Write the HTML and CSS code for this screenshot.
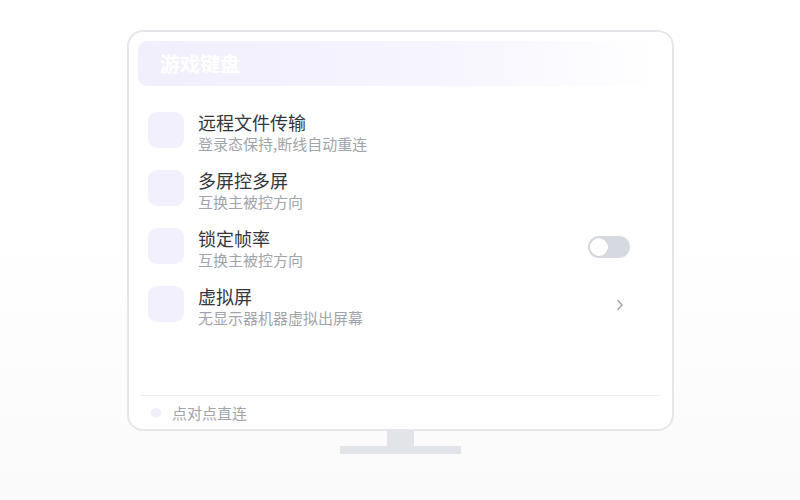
FILE: index.html
```html
<!DOCTYPE html>
<html lang="zh">
<head>
<meta charset="utf-8">
<link rel="stylesheet" href="styles.css">
</head>
<body>
<div class="stage">
  <div class="monitor">
    <div class="screen-header">游戏键盘</div>
    <div class="list">
      <div class="row">
        <div class="icon"></div>
        <div class="text">
          <div class="title">远程文件传输</div>
          <div class="sub">登录态保持,断线自动重连</div>
        </div>
      </div>
      <div class="row">
        <div class="icon"></div>
        <div class="text">
          <div class="title">多屏控多屏</div>
          <div class="sub">互换主被控方向</div>
        </div>
      </div>
      <div class="row">
        <div class="icon"></div>
        <div class="text">
          <div class="title">锁定帧率</div>
          <div class="sub">互换主被控方向</div>
        </div>
        <div class="toggle"><span class="knob"></span></div>
      </div>
      <div class="row">
        <div class="icon"></div>
        <div class="text">
          <div class="title">虚拟屏</div>
          <div class="sub">无显示器机器虚拟出屏幕</div>
        </div>
        <svg class="chevron" width="8" height="12" viewBox="0 0 8 12"><path d="M2 1.5 L6 6 L2 10.5" fill="none" stroke="#9aa1ab" stroke-width="1.3" stroke-linecap="round" stroke-linejoin="round"/></svg>
      </div>
    </div>
    <div class="footer">
      <span class="dot"></span>
      <span class="footer-text">点对点直连</span>
    </div>
  </div>
  <div class="neck"></div>
  <div class="base"></div>
</div>
</body>
</html>
```

FILE: styles.css
```css
* { box-sizing: border-box; }
html, body { margin: 0; padding: 0; }
body {
  width: 800px;
  height: 500px;
  overflow: hidden;
  background: linear-gradient(180deg, #ffffff 0%, #ffffff 46%, #fafafb 100%);
  font-family: "Noto Sans CJK SC", "Noto Sans", sans-serif;
}
.stage {
  display: flex;
  flex-direction: column;
  align-items: center;
  padding-top: 30px;
  padding-left: 1px;
}
.monitor {
  width: 547px;
  height: 401px;
  border: 2px solid #e4e6ea;
  border-radius: 16px;
  background: #ffffff;
  padding: 9px 9px 0 9px;
  display: flex;
  flex-direction: column;
}
.screen-header {
  height: 45px;
  border-radius: 9px;
  background: linear-gradient(90deg, #f2effd 0%, #f6f4fe 55%, rgba(255,255,255,0) 100%);
  color: #ffffff;
  font-size: 20px;
  font-weight: 700;
  line-height: 45px;
  padding-left: 22px;
}
.list {
  margin-top: 15px;
  display: flex;
  flex-direction: column;
}
.row {
  height: 58px;
  display: flex;
  align-items: center;
  padding: 0 33px 0 10px;
}
.icon {
  width: 36px;
  height: 36px;
  border-radius: 9px;
  background: #f3f0fe;
  flex: none;
}
.text {
  margin-left: 14px;
  margin-top: 6px;
  flex: 1;
}
.title {
  font-size: 18px;
  line-height: 22px;
  color: #33363c;
}
.sub {
  font-size: 15px;
  line-height: 22px;
  color: #a0a4ab;
}
.toggle {
  width: 42px;
  height: 22px;
  border-radius: 11px;
  background: #d6d9df;
  padding: 2px;
  display: flex;
  align-items: center;
  margin-top: 2px;
}
.knob {
  width: 18px;
  height: 18px;
  border-radius: 50%;
  background: #ffffff;
  box-shadow: 0 0 0 0.5px #c9ccd2;
}
.chevron {
  margin-right: 6px;
  margin-top: 2px;
}
.footer {
  margin: auto 2px 0 2px;
  height: 34px;
  border-top: 1px solid #eceef2;
  display: flex;
  align-items: center;
  padding-left: 11px;
}
.dot {
  width: 10px;
  height: 10px;
  border-radius: 50%;
  background: #f1eefd;
}
.footer-text {
  margin-left: 11px;
  font-size: 15px;
  color: #a0a4ab;
}
.neck {
  width: 27px;
  height: 15px;
  background: #e1e4e8;
}
.base {
  width: 121px;
  height: 8px;
  background: #e1e4e8;
}
```
